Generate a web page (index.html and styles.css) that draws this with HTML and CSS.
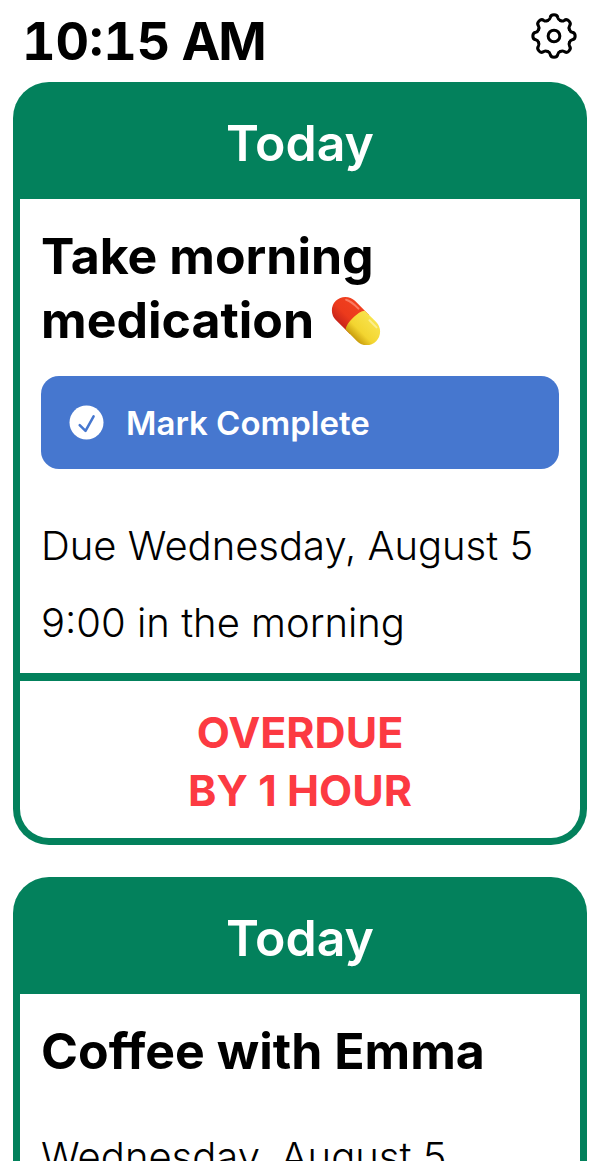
FILE: index.html
```html
<!DOCTYPE html>
<html lang="en">
<head>
<meta charset="utf-8">
<title>Today</title>
<link rel="stylesheet" href="styles.css">
</head>
<body>
<div class="screen">
  <header class="topbar">
    <div class="clock">10:15 <span class="clock-suffix">AM</span></div>
    <svg class="gear" viewBox="0 0 24 24" fill="none" stroke="#000" stroke-width="1.35" stroke-linecap="round" stroke-linejoin="round">
      <defs>
        <path id="tooth" d="M9.2 5.1Q10.1 4.800 10.300 3.900Q10.500 2.600 12 2.600Q13.500 2.600 13.700 3.900Q13.900 4.800 14.800 5.100"/>
      </defs>
      <use href="#tooth"/>
      <use href="#tooth" transform="rotate(45 12 12)"/>
      <use href="#tooth" transform="rotate(90 12 12)"/>
      <use href="#tooth" transform="rotate(135 12 12)"/>
      <use href="#tooth" transform="rotate(180 12 12)"/>
      <use href="#tooth" transform="rotate(225 12 12)"/>
      <use href="#tooth" transform="rotate(270 12 12)"/>
      <use href="#tooth" transform="rotate(315 12 12)"/>
      <circle cx="12" cy="12" r="2.600"/>
    </svg>
  </header>

  <section class="card">
    <h2 class="card-head">Today</h2>
    <div class="card-body">
      <h3 class="title">Take morning<br>medication
        <svg class="pill" viewBox="0 0 50 50">
          <defs>
            <linearGradient id="redGrad" x1="0" y1="0" x2="0" y2="1">
              <stop offset="0" stop-color="#f0401f"/>
              <stop offset=".6" stop-color="#ec3a1c"/>
              <stop offset="1" stop-color="#c8241a"/>
            </linearGradient>
            <linearGradient id="yellowGrad" x1="0" y1="0" x2="0" y2="1">
              <stop offset="0" stop-color="#f8e34c"/>
              <stop offset=".65" stop-color="#f3d530"/>
              <stop offset="1" stop-color="#c99d0c"/>
            </linearGradient>
          </defs>
          <g transform="rotate(45 25 25)">
            <path d="M30 11.500H10a13.500 13.500 0 0 0 0 27H30z" fill="url(#redGrad)"/>
            <path d="M24 11.500H40a13.500 13.500 0 0 1 0 27H24c-4.500-4-4.500-23 0-27z" fill="url(#yellowGrad)"/>
            <path d="M3 17Q7 14.500 18 14.500" fill="none" stroke="#ff8f78" stroke-width="2" stroke-linecap="round" opacity=".75"/>
            <path d="M34 15H44" stroke="#fff8c0" stroke-width="2" stroke-linecap="round" opacity=".6"/>
          </g>
        </svg>
      </h3>
      <button class="action" type="button">
        <svg class="check" viewBox="0 0 36 36">
          <circle cx="18" cy="18" r="17.500" fill="#fff"/>
          <path d="M11 20.700l6 6 8.300-15" fill="none" stroke="#4677cf" stroke-width="2.600" stroke-linecap="round" stroke-linejoin="round"/>
        </svg>
        Mark Complete
      </button>
      <p class="detail detail-first">Due Wednesday, August 5</p>
      <p class="detail">9:00 in the morning</p>
    </div>
    <div class="card-foot">OVERDUE<br>BY 1 HOUR</div>
  </section>

  <section class="card">
    <h2 class="card-head">Today</h2>
    <div class="card-body">
      <h3 class="title">Coffee with Emma</h3>
      <p class="detail detail-plain">Wednesday, August 5</p>
    </div>
  </section>
</div>
</body>
</html>
```
FILE: styles.css
```css
html, body {
  margin: 0;
  padding: 0;
  background: #fff;
}

body {
  font-family: Inter, "Liberation Sans", sans-serif;
  color: #000;
}

.screen {
  width: 600px;
  height: 1161px;
  overflow: hidden;
  box-sizing: border-box;
  padding: 0 13px;
}

.topbar {
  height: 82px;
  display: flex;
  justify-content: space-between;
  align-items: flex-start;
  padding: 0 10px 0 9px;
}

.clock {
  font-size: 52px;
  font-weight: 700;
  font-variant-numeric: tabular-nums;
  line-height: 60px;
  margin-top: 12px;
  word-spacing: -3px;
}

.clock-suffix {
  letter-spacing: -2px;
}

.gear {
  width: 54px;
  height: 54px;
  margin-top: 9px;
  margin-right: -4px;
}

.card {
  border-radius: 36px;
  padding: 0 7px 7px;
  background: #03815c;
  margin-bottom: 32px;
}

.card-head {
  margin: 0;
  height: 117px;
  color: #fff;
  font-size: 50px;
  font-weight: 600;
  line-height: 122px;
  text-align: center;
}

.card-body {
  padding: 25px 21px 12px;
  background: #fff;
}

.title {
  margin: 0;
  font-size: 50px;
  font-weight: 700;
  line-height: 64px;
}

.pill {
  width: 50px;
  height: 50px;
  vertical-align: -8px;
  margin-left: 5px;
}

.action {
  display: flex;
  align-items: center;
  gap: 22px;
  width: 100%;
  height: 93px;
  margin-top: 24px;
  padding: 0 28px;
  box-sizing: border-box;
  border: 0;
  border-radius: 18px;
  background: #4677cf;
  color: #fff;
  font-family: inherit;
  font-size: 33px;
  font-weight: 600;
}

.check {
  width: 35px;
  height: 35px;
}

.detail {
  margin: 0;
  font-size: 40px;
  font-weight: 300;
  line-height: 77px;
  height: 77px;
}

.detail-first {
  margin-top: 38px;
}

.detail-plain {
  margin-top: 35px;
}

.card-foot {
  margin-top: 8px;
  height: 157px;
  box-sizing: border-box;
  padding-top: 22px;
  border-radius: 0 0 29px 29px;
  background: #fff;
  color: #fc3a42;
  font-size: 43px;
  font-weight: 700;
  line-height: 58px;
  text-align: center;
}
```
